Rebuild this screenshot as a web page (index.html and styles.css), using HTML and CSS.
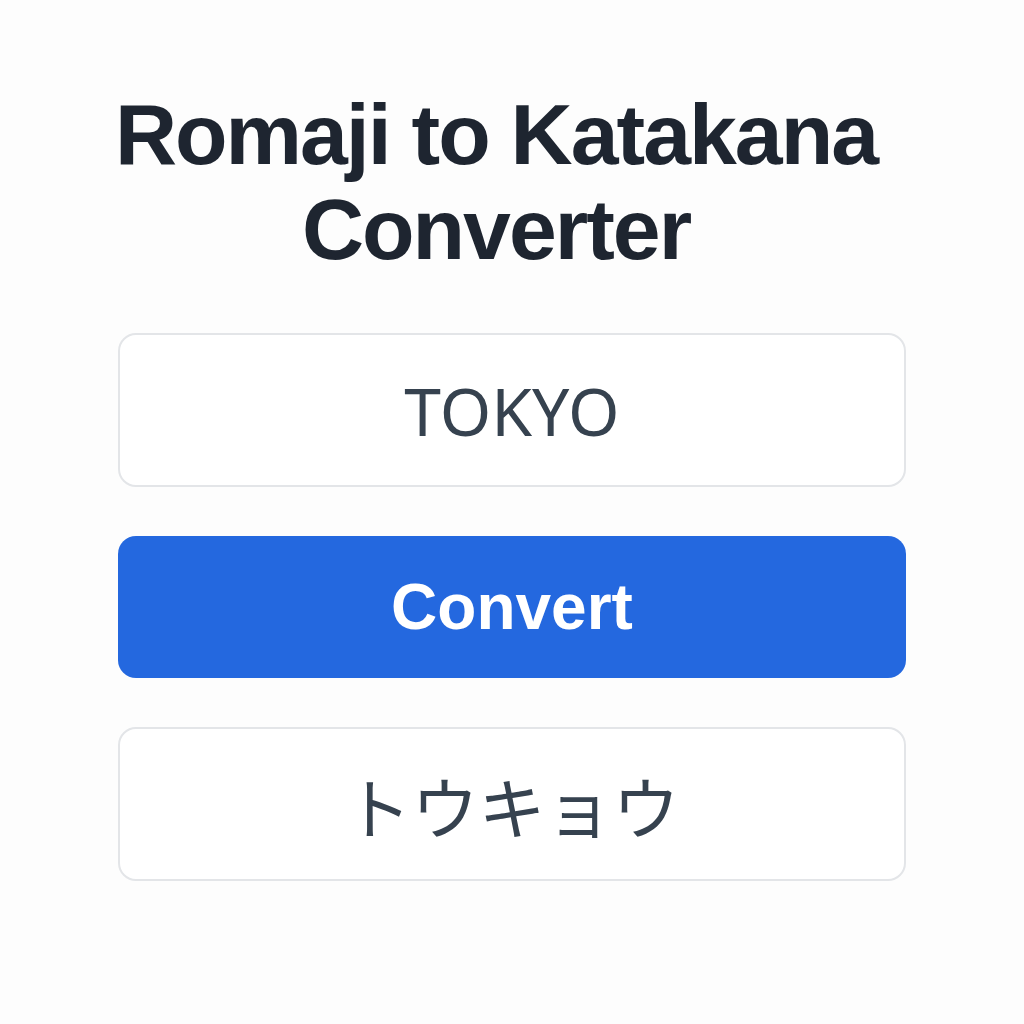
FILE: index.html
```html
<!DOCTYPE html>
<html lang="en">
<head>
    <meta charset="UTF-8">
    <meta name="viewport" content="width=device-width, initial-scale=1.0">
    <title>Romaji to Katakana Converter</title>
    <link rel="stylesheet" href="styles.css">
</head>
<body>
    <div class="container">
        <h1>Romaji to Katakana<br>Converter</h1>
        <input type="text" id="romaji" class="field" value="TOKYO">
        <button class="convert" onclick="convert()">Convert</button>
        <div class="field output" id="result">トウキョウ</div>
    </div>

    <script>
        const table = {
            kyo: 'キョ', to: 'ト', o: 'ウ', u: 'ウ', ka: 'カ', ki: 'キ', ku: 'ク', ke: 'ケ', ko: 'コ',
            a: 'ア', i: 'イ', e: 'エ', ta: 'タ', te: 'テ', na: 'ナ', ni: 'ニ', nu: 'ヌ', ne: 'ネ', no: 'ノ',
            sa: 'サ', shi: 'シ', su: 'ス', se: 'セ', so: 'ソ', chi: 'チ', tsu: 'ツ', n: 'ン'
        };

        function convert() {
            let text = document.getElementById('romaji').value.toLowerCase();
            let out = "";
            let i = 0;
            while (i < text.length) {
                let found = false;
                for (let len = 3; len > 0; len--) {
                    const part = text.substr(i, len);
                    if (table[part]) {
                        out += table[part];
                        i += len;
                        found = true;
                        break;
                    }
                }
                if (!found) {
                    out += text[i];
                    i++;
                }
            }
            document.getElementById('result').innerText = out;
        }
    </script>
</body>
</html>
```

FILE: styles.css
```css
body {
    margin: 0;
    background-color: #fdfdfd;
    font-family: "Liberation Sans", Arial, sans-serif;
}
.container {
    width: 788px;
    margin: 0 auto;
    padding-top: 87px;
    display: flex;
    flex-direction: column;
}
h1 {
    margin: 0 -40px 56px;
    padding-right: 32px;
    white-space: nowrap;
    text-align: center;
    font-size: 86px;
    line-height: 95px;
    font-weight: bold;
    letter-spacing: -2px;
    color: #1e2530;
}
.field {
    box-sizing: border-box;
    width: 100%;
    height: 154px;
    border: 2px solid #e3e5e8;
    border-radius: 18px;
    background: #fff;
    text-align: center;
    color: #36424f;
    font-family: "Noto Sans", sans-serif;
    font-size: 66px;
    outline: none;
    padding: 0;
}
.convert {
    height: 142px;
    margin: 49px 0;
    border: none;
    border-radius: 18px;
    background-color: #2468df;
    color: #fff;
    font-family: "Liberation Sans", Arial, sans-serif;
    font-size: 64px;
    font-weight: bold;
    cursor: pointer;
}
.output {
    display: flex;
    align-items: center;
    justify-content: center;
    font-family: "Noto Sans CJK JP", sans-serif;
    font-size: 67px;
    font-weight: 400;
}
```
